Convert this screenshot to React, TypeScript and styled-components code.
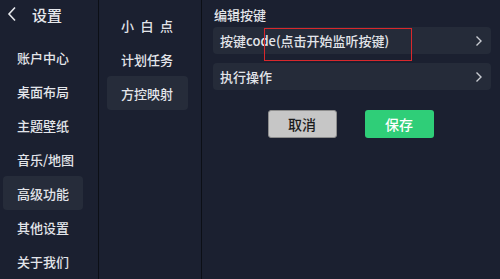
import React from "react";
import styled, { createGlobalStyle } from "styled-components";

const GlobalStyle = createGlobalStyle`
  html, body {
    margin: 0;
    padding: 0;
    background: #1b2030;
  }
  body {
    font-family: "Noto Sans CJK SC", "Noto Sans", sans-serif;
    font-weight: 500;
    color: #e6e8ec;
  }
`;

const mainMenu = ["账户中心", "桌面布局", "主题壁纸", "音乐/地图", "高级功能", "其他设置", "关于我们"];
const subMenu = ["小\u2002白\u2002点", "计划任务", "方控映射"];

const Chevron = () => (
  <svg width="8" height="12" viewBox="0 0 8 12" fill="none">
    <path d="M1.5 1.5 L6 6 L1.5 10.5" stroke="#c9ccd2" strokeWidth="1.4" />
  </svg>
);

export default function App() {
  return (
    <>
      <GlobalStyle />
      <SPage>
        <SMainCol>
          <SHeader>
            <svg width="10" height="16" viewBox="0 0 10 16" fill="none">
              <path d="M8 1.5 L2 8 L8 14.5" stroke="#e6e8ec" strokeWidth="1.6" />
            </svg>
            <span>设置</span>
          </SHeader>
          <SMenu>
            {mainMenu.map(m => (
              <SMainItem key={m} $active={m === "高级功能"}>
                {m}
              </SMainItem>
            ))}
          </SMenu>
        </SMainCol>
        <SSubCol>
          {subMenu.map(m => (
            <SSubItem key={m} $active={m === "方控映射"}>
              {m}
            </SSubItem>
          ))}
        </SSubCol>
        <SContent>
          <STitle>编辑按键</STitle>
          <SRow>
            <span>按键code(点击开始监听按键)</span>
            <Chevron />
            <SMark />
          </SRow>
          <SRow>
            <span>执行操作</span>
            <Chevron />
          </SRow>
          <SActions>
            <SButton $kind="cancel">取消</SButton>
            <SButton $kind="save">保存</SButton>
          </SActions>
        </SContent>
      </SPage>
    </>
  );
}

const SPage = styled.div`
  display: grid;
  grid-template-columns: 99px 103px 1fr;
  width: 500px;
  height: 279px;
  overflow: hidden;
  background: #1b2030;
`;

const SMainCol = styled.div`
  display: flex;
  flex-direction: column;
  border-right: 1px solid #0c0f16;
`;

const SHeader = styled.div`
  display: flex;
  align-items: center;
  gap: 15px;
  height: 28px;
  padding-left: 7px;
  font-size: 15px;
  color: #e6e8ec;
`;

const SMenu = styled.div`
  display: flex;
  flex-direction: column;
  padding: 12px 3px 0 3px;
`;

const SMainItem = styled.div<{ $active?: boolean }>`
  height: 34px;
  display: flex;
  align-items: center;
  padding-left: 14px;
  width: 80px;
  box-sizing: border-box;
  border-radius: 4px;
  font-size: 13px;
  color: #e3e5ea;
  background: ${p => (p.$active ? "#262c3a" : "transparent")};
`;

const SSubCol = styled.div`
  display: flex;
  flex-direction: column;
  padding: 8px 0 0 8px;
  border-right: 1px solid #0c0f16;
`;

const SSubItem = styled.div<{ $active?: boolean }>`
  height: 34px;
  width: 81px;
  box-sizing: border-box;
  display: flex;
  align-items: center;
  padding-left: 14px;
  border-radius: 4px;
  font-size: 13px;
  color: #e3e5ea;
  white-space: pre;
  background: ${p => (p.$active ? "#262c3a" : "transparent")};
`;

const SContent = styled.div`
  display: flex;
  flex-direction: column;
  padding: 6px 9px 0 11px;
`;

const STitle = styled.div`
  font-size: 13px;
  height: 21px;
  line-height: 17px;
  padding-left: 1px;
  color: #e3e5ea;
`;

const SRow = styled.div`
  position: relative;
  height: 27px;
  display: flex;
  align-items: center;
  justify-content: space-between;
  padding: 0 8px 0 7px;
  margin-bottom: 9px;
  background: #252b39;
  border-radius: 4px;
  font-size: 13px;
  color: #e3e5ea;
`;

const SMark = styled.div`
  position: absolute;
  left: 51px;
  top: 1px;
  width: 148px;
  height: 33px;
  box-sizing: border-box;
  border: 1.5px solid #d8282c;
`;

const SActions = styled.div`
  display: flex;
  justify-content: center;
  gap: 28px;
  margin-top: 11px;
  padding-right: 3px;
`;

const SButton = styled.div<{ $kind: "cancel" | "save" }>`
  width: 69px;
  height: 28px;
  box-sizing: border-box;
  display: flex;
  align-items: center;
  justify-content: center;
  border-radius: 3px;
  font-size: 14px;
  ${p =>
    p.$kind === "cancel"
      ? "background: #c6c6c6; color: #1a1a1a; border: 1px solid #8d8d8d;"
      : "background: #2fce78; color: #ffffff;"}
`;
